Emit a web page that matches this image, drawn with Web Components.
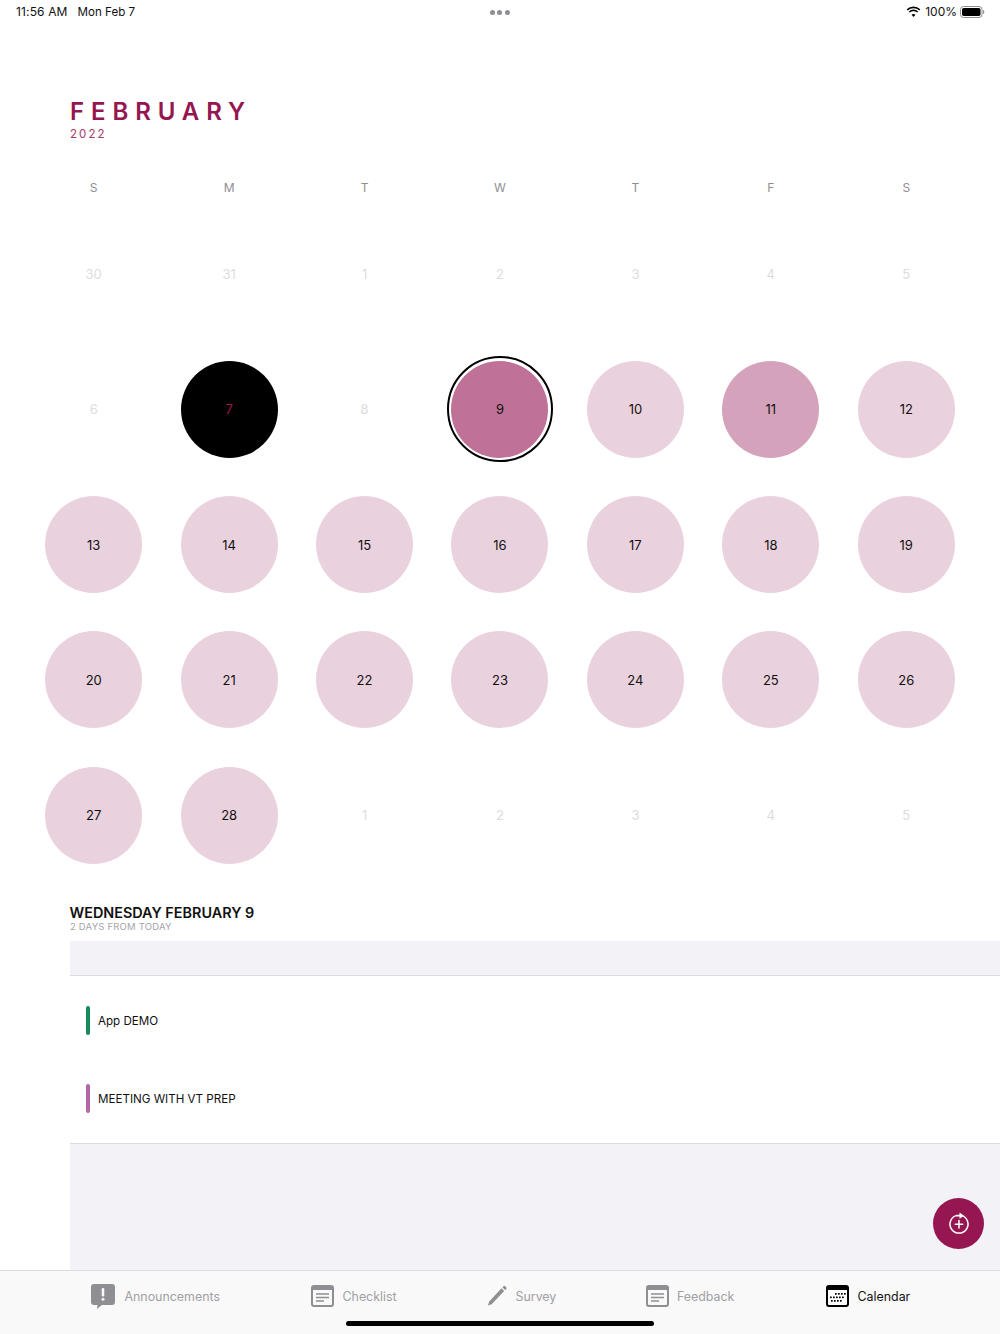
<!DOCTYPE html>
<html><head><meta charset="utf-8"><style>
html,body{margin:0;padding:0;background:#fff;font-family:Inter,"Liberation Sans",sans-serif}
</style></head><body>
<app-shell></app-shell>
<script>
const ICON={
 ann:'<svg width="26" height="26" viewBox="0 0 26 26"><path d="M4 1h18a3 3 0 0 1 3 3v15a3 3 0 0 1-3 3H12l-5 4 .5-4H4a3 3 0 0 1-3-3V4a3 3 0 0 1 3-3z" fill="#8e8e93"/><rect x="11.7" y="5" width="2.6" height="8.5" rx="1.2" fill="#f9f9f9"/><circle cx="13" cy="16.3" r="1.5" fill="#f9f9f9"/></svg>',
 doc:c=>`<svg width="23" height="22" viewBox="0 0 23 22"><rect x="1" y="1" width="21" height="20" rx="2" fill="none" stroke="${c}" stroke-width="2"/><path d="M1 1h21v4H1z" fill="${c}"/><path d="M5 9h13M5 12.5h13M5 16h8" stroke="${c}" stroke-width="1.3"/></svg>`,
 pen:'<svg width="20.500" height="22" viewBox="0 0 22 22" preserveAspectRatio="none"><path d="M1 20.5l1.4-4L15.6 3.3l2.8 2.8L5 19.2z" fill="#8e8e93"/><path d="M16.6 2.3l1.3-1.2a1 1 0 0 1 1.4 0l1.4 1.4a1 1 0 0 1 0 1.4L19.4 5.1z" fill="#8e8e93"/></svg>',
 cal:'<svg width="23" height="22" viewBox="0 0 23 22"><rect x="1" y="1" width="21" height="20" rx="2" fill="#fff" stroke="#000" stroke-width="2"/><path d="M1 1h21v4H1z" fill="#000"/><g fill="#000"><rect x="9" y="8" width="1.7" height="1.7"/><rect x="12" y="8" width="1.7" height="1.7"/><rect x="15" y="8" width="1.7" height="1.7"/><rect x="18" y="8" width="1.7" height="1.7"/><rect x="4" y="11.500" width="1.7" height="1.7"/><rect x="7" y="11.500" width="1.7" height="1.7"/><rect x="10" y="11.500" width="1.7" height="1.7"/><rect x="13" y="11.500" width="1.7" height="1.7"/><rect x="16" y="11.500" width="1.7" height="1.7"/><rect x="5" y="15" width="1.7" height="1.7"/><rect x="8" y="15" width="1.7" height="1.7"/><rect x="11" y="15" width="1.7" height="1.7"/><rect x="14" y="15" width="1.7" height="1.7"/></g></svg>'
};
function def(name,css,html){
 customElements.define(name,class extends HTMLElement{
  constructor(){super();const r=this.attachShadow({mode:'open'});r.innerHTML=`<style>${css}</style>${typeof html==='function'?html(this):html}`;}
 });
}
def('status-bar',`
 :host{display:flex;height:24px;flex:none;align-items:center;justify-content:space-between;padding:0 15px 1px 16px;font-size:12px;color:#111;position:relative;box-sizing:border-box}
 .l{display:flex;gap:10px;align-items:baseline}
 .l span:first-child{letter-spacing:.14px}
 .l span:last-child{font-size:11.600px}
 .dots{position:absolute;left:489.500px;top:10px;display:flex;gap:2.700px}
 .dots i{width:5px;height:5px;border-radius:50%;background:#8e8e93;display:block}
 .r{display:flex;align-items:center;gap:4px}
`,`<div class="l"><span>11:56 AM</span><span>Mon Feb 7</span></div>
 <div class="dots"><i></i><i></i><i></i></div>
 <div class="r"><svg width="15" height="11" viewBox="0 0 15 11"><path d="M7.5 2.2c2.2 0 4.200.9 5.700 2.300l1.100-1.200A9.900 9.900 0 0 0 7.500.5 9.900 9.900 0 0 0 .7 3.300l1.100 1.200A8.200 8.200 0 0 1 7.500 2.200z" fill="#000"/><path d="M7.500 5.200c1.400 0 2.600.5 3.600 1.400l1.100-1.200a7 7 0 0 0-9.400 0l1.100 1.200c1-.9 2.200-1.400 3.600-1.400z" fill="#000"/><path d="M7.500 8c-.8 0-1.400.3-2 .8l2 2.200 2-2.200c-.6-.5-1.200-.8-2-.8z" fill="#000"/></svg>
 <span>100%</span>
 <svg width="25" height="12" viewBox="0 0 25 12" style="margin-left:-1px"><rect x=".5" y=".5" width="21.500" height="11" rx="3" fill="none" stroke="#8e8e93"/><rect x="2" y="2" width="18.500" height="8" rx="1.700" fill="#000"/><path d="M23 4v4c.8-.3 1.300-1 1.300-2s-.5-1.700-1.300-2z" fill="#8e8e93"/></svg></div>`);
def('month-header',`
 :host{display:block;flex:none;padding:73px 0 0 70px;height:84px;color:#951650}
 .m{font-size:24px;line-height:29px;font-weight:600;letter-spacing:6.900px}
 .y{font-size:11.500px;line-height:14px;letter-spacing:2.100px;margin-top:.5px;color:#a83a6a}
`,`<div class="m">FEBRUARY</div><div class="y">2022</div>`);
def('week-days',`
 :host{display:grid;flex:none;grid-template-columns:repeat(7,135.430px);padding:0 26px;height:25px;align-items:start;box-sizing:border-box}
 span{text-align:center;font-size:12px;line-height:13px;color:#8e8e93}
`,`<span>S</span><span>M</span><span>T</span><span>W</span><span>T</span><span>F</span><span>S</span>`);
def('day-cell',`
 :host{display:flex;align-items:center;justify-content:center;height:135.430px;font-size:13px;color:#111}
 .c{width:97px;height:97px;border-radius:50%;display:flex;align-items:center;justify-content:center;position:relative;background:var(--bg,transparent);color:var(--fg,#111)}
 :host([kind=off]){--fg:#dcdce0}
 :host([kind=event]){--bg:#ead1de}
 :host([kind=today]){--bg:#000;--fg:#9a1750}
 :host([kind=strong]){--bg:#d4a2bb}
 :host([kind=sel]){--bg:#bf7197}
 .ring{display:none}
 :host([kind=sel]) .ring{display:block;position:absolute;inset:-4.500px;border:2px solid #000;border-radius:50%;box-sizing:border-box}
`,`<div class="c"><i class="ring"></i><slot></slot></div>`);
def('month-grid',`:host{display:grid;flex:none;grid-template-columns:repeat(7,135.430px);padding:0 26px}`,`<slot></slot>`);
def('agenda-item',`
 :host{display:flex;flex:none;align-items:center;height:78px;padding-left:16px;font-size:11.600px;color:#111;gap:8px}
 i{display:block;width:4.500px;height:29px;border-radius:2.200px;background:var(--c);margin-top:-2px}
`,`<i></i><span><slot></slot></span>`);
def('agenda-panel',`
 :host{margin-left:69.500px;flex:1;display:flex;flex-direction:column;min-height:0}
 .t{font-size:14.400px;line-height:17px;font-weight:600;color:#111;flex:none}
 .s{font-size:9.500px;line-height:12px;color:#a4a4a8;letter-spacing:.2px;margin:0 0 0 .5px;flex:none}
 .band{height:34px;flex:none;background:#f2f2f7;border-bottom:1px solid #dcdce0;margin-top:8px}
 .list{padding:6px 0;border-bottom:1px solid #dcdce0;display:flex;flex:none;flex-direction:column;height:168px;box-sizing:border-box}
 .rest{flex:1;background:#f2f2f7}
`,`<div class="t">WEDNESDAY FEBRUARY 9</div><div class="s">2 DAYS FROM TODAY</div><div class="band"></div>
 <div class="list"><slot></slot></div><div class="rest"></div>`);
def('tab-item',`
 :host{display:flex;align-items:center;gap:8.500px;font-size:12.400px;color:#a0a0a4;position:absolute;top:0;height:50px}
 :host([active]){color:#111}
 .i{display:flex}
`,`<span class="i"><slot name="icon"></slot></span><span><slot></slot></span>`);
def('tab-bar',`
 :host{display:block;flex:none;height:64px;background:#f9f9f9;border-top:1px solid #dcdce0;box-sizing:border-box;position:relative}
 .h{position:absolute;left:346px;top:50px;width:308px;height:5px;border-radius:3px;background:#000}
`,`<slot></slot><div class="h"></div>`);
def('fab-button',`
 :host{position:absolute;left:933px;top:1198px;width:51px;height:51px;border-radius:50%;background:#951650;display:flex;align-items:center;justify-content:center}
`,`<svg width="24" height="26" viewBox="0 0 24 26"><path d="M15 4.600a9 9 0 1 1-6 0" fill="none" stroke="#fff" stroke-width="1.500"/><path d="M9 3.800h3.500V1.500L17 4.700l-4.500 3V5.400H9z" fill="#fff"/><path d="M12 9.500v7.500M8.300 13.300h7.400" stroke="#fff" stroke-width="1.500" stroke-linecap="round"/></svg>`);
def('app-shell',`
 :host{display:flex;flex-direction:column;width:1000px;height:1334px;position:relative;overflow:hidden;background:#fff;font-family:Inter,"Liberation Sans",sans-serif}
 .gap{height:21px;flex:none}
`,()=>{
 const off=n=>`<day-cell kind="off">${n}</day-cell>`;
 let g='';
 [30,31,1,2,3,4,5,6].forEach(n=>g+=off(n));
 g+=`<day-cell kind="today">7</day-cell>`+off(8)+`<day-cell kind="sel">9</day-cell><day-cell kind="event">10</day-cell><day-cell kind="strong">11</day-cell>`;
 for(let i=12;i<=28;i++)g+=`<day-cell kind="event">${i}</day-cell>`;
 [1,2,3,4,5].forEach(n=>g+=off(n));
 const tabs=[[90,'Announcements',ICON.ann],[311,'Checklist',ICON.doc('#8e8e93')],[486.5,'Survey',ICON.pen],[645.5,'Feedback',ICON.doc('#8e8e93')],[826,'Calendar',ICON.cal,1]];
 return `<status-bar></status-bar><month-header></month-header><week-days></week-days>
 <month-grid>${g}</month-grid><div class="gap"></div>
 <agenda-panel><agenda-item style="--c:#1a8a5a">App DEMO</agenda-item><agenda-item style="--c:#b565a7">MEETING WITH VT PREP</agenda-item></agenda-panel>
 <tab-bar>${tabs.map(t=>`<tab-item style="left:${t[0]}px" ${t[3]?'active':''}><span slot="icon" style="display:flex">${t[2]}</span>${t[1]}</tab-item>`).join('')}</tab-bar>
 <fab-button></fab-button>`;
});
</script></body></html>
